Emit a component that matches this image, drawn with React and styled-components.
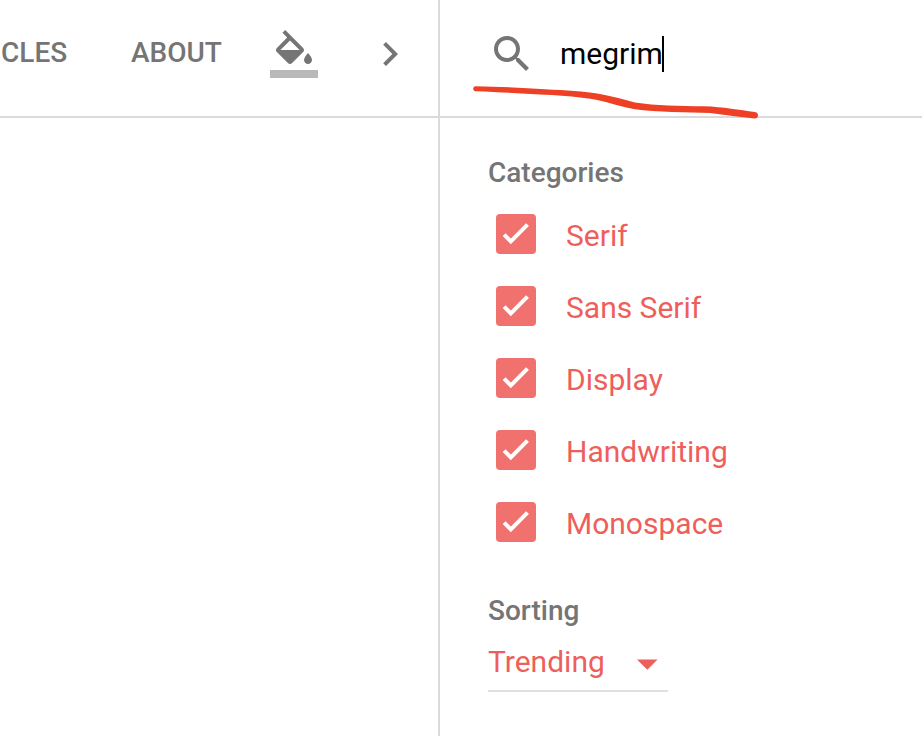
import React from "react";
import styled, { createGlobalStyle } from "styled-components";

const GlobalStyle = createGlobalStyle`
  *, *::before, *::after { box-sizing: border-box; }
  body {
    margin: 0;
    background: #fff;
    font-family: Roboto, sans-serif;
    overflow: hidden;
  }
`;

const GREY = "#757575";
const LINE = "#dadada";
const CORAL = "#ee5f5b";

const Page = styled.div`
  position: relative;
  display: grid;
  grid-template-columns: 438px 1fr;
  width: 100%;
  height: 100vh;
  overflow: hidden;
`;

const Main = styled.main`
  min-width: 0;
`;

const Sidebar = styled.aside`
  border-left: 2px solid ${LINE};
`;

const Toolbar = styled.header`
  display: flex;
  align-items: flex-start;
  height: 118px;
  padding: 30px 0 0 ${(p) => p.$inset || "0"};
  border-bottom: 2px solid ${LINE};
`;

const NavLink = styled.a`
  width: ${(p) => p.$width};
  margin-top: 7px;
  color: ${GREY};
  font-size: 28px;
  font-weight: 500;
  line-height: 32px;
`;

const Icon = styled.svg`
  flex: none;
  width: 48px;
  height: 48px;
  margin-right: ${(p) => p.$gap || "0"};
  fill: ${GREY};
`;

const SearchText = styled.div`
  width: 104px;
  height: 36px;
  margin: 6px 0 0 24px;
  border-right: 2px solid #000;
  color: #000;
  font-size: 30px;
  line-height: 36px;
`;

const Filters = styled.div`
  display: flex;
  flex-direction: column;
  padding: 39px 0 0 48px;
`;

const Heading = styled.h2`
  margin: 0;
  color: ${GREY};
  font-size: 28px;
  font-weight: 500;
  line-height: 32px;
`;

const Categories = styled.div`
  display: flex;
  flex-direction: column;
  gap: 32px;
  padding: 25px 0 53px 8px;
`;

const CheckRow = styled.label`
  display: flex;
  gap: 30px;
  height: 40px;
  color: ${CORAL};
  font-size: 30px;
  line-height: 44px;
`;

const Checkbox = styled.svg`
  flex: none;
  width: 40px;
  height: 40px;
  border-radius: 4px;
  background: #f0716d;
  fill: none;
  stroke: #fff;
  stroke-width: 4;
`;

const Select = styled.div`
  display: flex;
  width: 180px;
  height: 65px;
  padding-top: 17px;
  border-bottom: 2px solid #e0e0e0;
  color: ${CORAL};
  font-size: 30px;
  line-height: 36px;
`;

const SelectValue = styled.span`
  width: 149px;
`;

const Caret = styled.svg`
  flex: none;
  width: 21px;
  height: 11px;
  margin-top: 15px;
  fill: ${CORAL};
`;

const Scribble = styled.svg`
  position: absolute;
  left: 472px;
  top: 84px;
  width: 288px;
  height: 36px;
  fill: #ee4024;
`;

const categories = ["Serif", "Sans Serif", "Display", "Handwriting", "Monospace"];

export default function App() {
  return (
    <>
      <GlobalStyle />
      <Page>
        <Main>
          <Toolbar $inset="1px">
            <NavLink $width="130px">CLES</NavLink>
            <NavLink $width="139px">ABOUT</NavLink>
            <Icon viewBox="0 0 24 24" $gap="48px">
              <path d="M16.56 8.94L7.62 0 6.21 1.41l2.38 2.38-5.15 5.15c-.59.59-.59 1.54 0 2.12l5.5 5.5c.29.29.68.44 1.06.44s.77-.15 1.06-.44l5.5-5.5c.59-.58.59-1.53 0-2.12zM5.21 10L10 5.21 14.79 10H5.21zM19 11.5s-2 2.17-2 3.5c0 1.1.9 2 2 2s2-.9 2-2c0-1.33-2-3.5-2-3.5z" />
              <path fill="#b9b9b9" d="M0 20h24v4H0z" />
            </Icon>
            <Icon viewBox="0 0 24 24">
              <path d="M10 6L8.59 7.41 13.17 12l-4.58 4.59L10 18l6-6z" />
            </Icon>
          </Toolbar>
        </Main>
        <Sidebar>
          <Toolbar $inset="48px">
            <Icon viewBox="0 0 24 24">
              <path d="M15.5 14h-.79l-.28-.27C15.41 12.59 16 11.11 16 9.5 16 5.91 13.09 3 9.5 3S3 5.91 3 9.5 5.91 16 9.5 16c1.61 0 3.09-.59 4.23-1.57l.27.28v.79l5 4.99L20.49 19l-4.99-5zm-6 0C7.01 14 5 11.99 5 9.5S7.01 5 9.5 5 14 7.01 14 9.5 11.99 14 9.5 14z" />
            </Icon>
            <SearchText>megrim</SearchText>
          </Toolbar>
          <Filters>
            <Heading>Categories</Heading>
            <Categories>
              {categories.map((name) => (
                <CheckRow key={name}>
                  <Checkbox viewBox="0 0 40 40">
                    <path d="M8.1 20.7L14.8 27.4L31.5 10.7" />
                  </Checkbox>
                  {name}
                </CheckRow>
              ))}
            </Categories>
            <Heading>Sorting</Heading>
            <Select>
              <SelectValue>Trending</SelectValue>
              <Caret viewBox="0 0 21 11">
                <path d="M0 .5h20.6L10.3 10.8z" />
              </Caret>
            </Select>
          </Filters>
        </Sidebar>
        <Scribble viewBox="472 84 288 36">
          <path d="M475.5 86.2C500 86.4 525 88.2 545 89.3C566 90.3 584 91.4 600 94C613 96.4 624 99.8 635 102.4C656 105.6 680 105.9 704 106.3C724 106.9 739 110.2 755 111.9C759.3 112.6 759 118.5 754.5 118.4C740 117.6 726 114.8 710 113.1C688 112.4 656 112.2 635 109.3C622 107 609 102.6 596 99.8C581 97 563 95.6 545 94.7C520 93.5 500 92 475.5 91.2C472.4 90.8 472.4 86.6 475.5 86.2Z" />
        </Scribble>
      </Page>
    </>
  );
}
